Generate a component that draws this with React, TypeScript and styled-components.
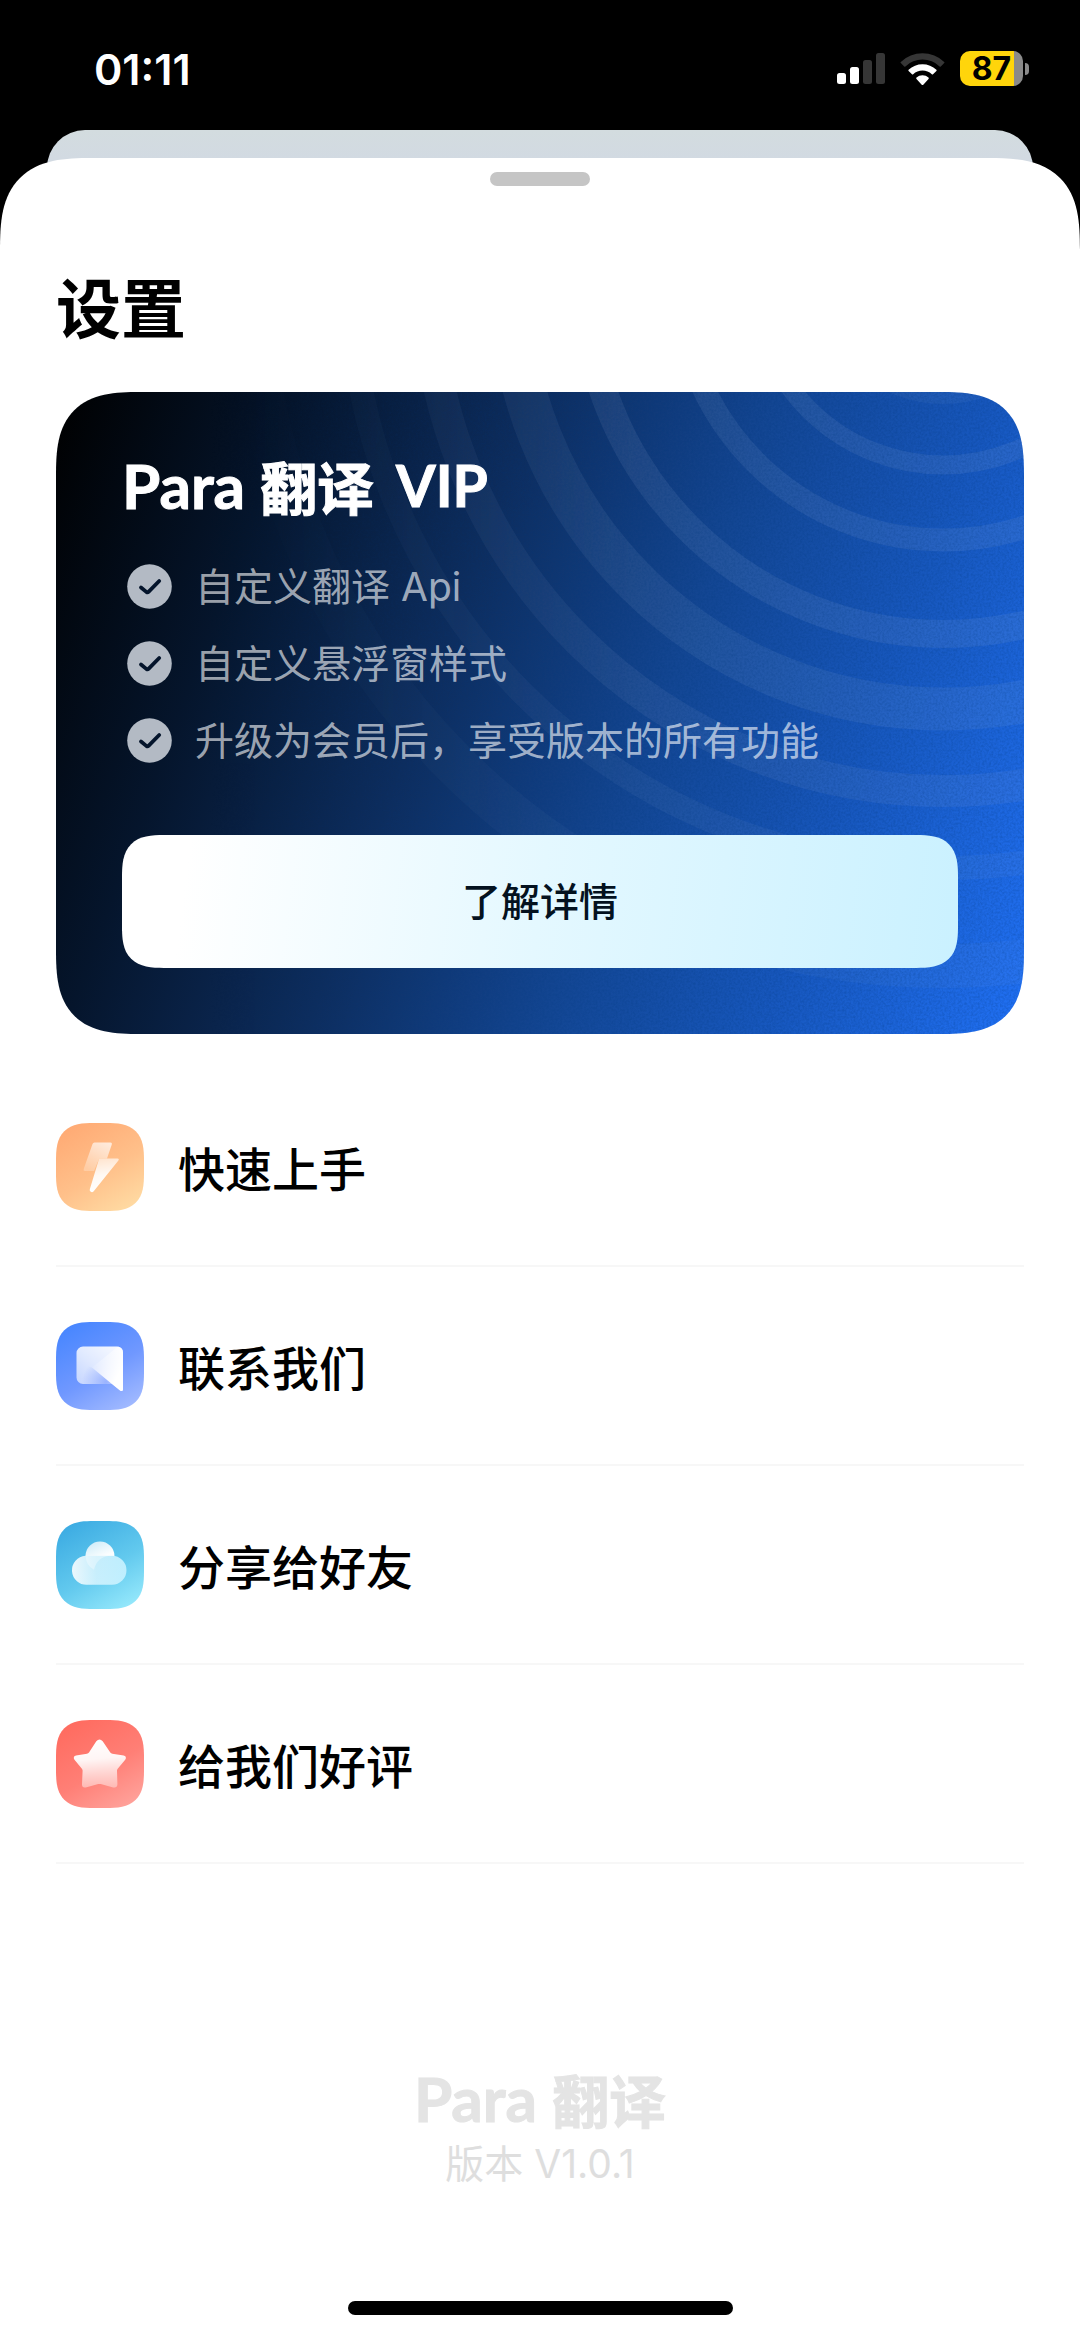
import React from "react";
import styled, { createGlobalStyle, css } from "styled-components";

const latin = `Inter, "Noto Sans CJK SC", sans-serif`;
const han = `"Noto Sans CJK SC", sans-serif`;

const GlobalStyle = createGlobalStyle`
  *, *::before, *::after { box-sizing: border-box; }
  html, body { margin: 0; padding: 0; background: #000; }
  body { font-family: ${latin}; color: #000; }
  h1, h2, p, ul { margin: 0; padding: 0; }
  ul { list-style: none; }
  button { font-family: inherit; border: 0; padding: 0; cursor: pointer; }
`;

/* Continuous corners where the browser knows them, plain round ones elsewhere. */
const smooth = (plain: number, extended: number, topOnly = false) => {
  const radius = (r: number) => (topOnly ? `${r}px ${r}px 0 0` : `${r}px`);
  return css`
    border-radius: ${radius(plain)};
    @supports (corner-shape: superellipse(1.5)) {
      border-radius: ${radius(extended)};
      corner-shape: superellipse(1.5);
    }
  `;
};

const Screen = styled.div`
  display: flex;
  flex-direction: column;
  min-height: 100vh;
  background: #000;
`;

const StatusBar = styled.header`
  display: flex;
  align-items: center;
  justify-content: space-between;
  height: 130px;
  padding: 7px 51px 0 94px;
  color: #fff;
`;

const Clock = styled.time`
  font-size: 43px;
  line-height: 52px;
  font-weight: 600;
`;

const StatusIcons = styled.div`
  display: flex;
  align-items: center;
  gap: 15px;
`;

const Battery = styled.div`
  display: flex;
  align-items: center;
  gap: 2px;
`;

const BatteryBody = styled.div`
  display: flex;
  align-items: center;
  justify-content: center;
  width: 63px;
  height: 35px;
  border-radius: 10px;
  background: linear-gradient(90deg, #ffd50b 86%, #8a8a8a 86%);
  color: #000;
  font-size: 32px;
  line-height: 35px;
  font-weight: 700;
`;

const BatteryTip = styled.div`
  width: 4px;
  height: 12px;
  border-radius: 0 4px 4px 0;
  background: #8a8a8a;
`;

const PageBehind = styled.div`
  height: 80px;
  margin: 0 47px;
  border-radius: 38px 38px 0 0;
  background: linear-gradient(#d3dcdf, #d2dae2 28px);
`;

const Sheet = styled.main`
  display: flex;
  flex: 1;
  flex-direction: column;
  margin-top: -52px;
  padding: 14px 56px 22px;
  background: #fff;
  ${smooth(66, 92, true)}
`;

const Grabber = styled.div`
  align-self: center;
  width: 100px;
  height: 14px;
  border-radius: 7px;
  background: #c5c5c5;
`;

const Title = styled.h1`
  margin-top: 84px;
  font-size: 65px;
  line-height: 80px;
  font-weight: 700;
`;

const Card = styled.section`
  position: relative;
  display: flex;
  flex-direction: column;
  margin-top: 42px;
  padding: 61px 66px 66px;
  overflow: hidden;
  background: linear-gradient(110deg, #000 0%, #05152c 20%, #0d2d5e 40%, #134693 60%, #1757bd 78%, #2171f5 100%);
  ${smooth(61, 84)}
`;

const CardArt = styled.svg`
  position: absolute;
  inset: 0;
  width: 100%;
  height: 100%;
`;

const BrandLine = styled.div<{ $tone: string }>`
  position: relative;
  display: flex;
  align-items: center;
  height: 64px;
  color: ${(p) => p.$tone};
  font-family: Lato, ${han};
  font-size: 62px;
  line-height: 64px;
  font-weight: 700;
  -webkit-text-stroke: 1px ${(p) => p.$tone};
`;

const BrandHan = styled.span`
  margin-left: 15px;
  font-family: ${han};
  font-size: 57px;
`;

const BrandTier = styled.span`
  margin-left: 22px;
  font-size: 57px;
`;

const Features = styled.ul`
  position: relative;
  display: flex;
  flex-direction: column;
  gap: 32px;
  margin: 47px 0 0 5px;
`;

const Feature = styled.li`
  display: flex;
  align-items: center;
  gap: 23px;
  height: 45px;
  color: rgba(255, 255, 255, 0.62);
  font-size: 39px;
  line-height: 45px;
`;

const DetailsButton = styled.button`
  position: relative;
  height: 133px;
  margin-top: 72px;
  background: linear-gradient(97deg, #fff 8%, #e4f8ff 50%, #caf1ff 100%);
  color: #04121f;
  font-size: 39px;
  line-height: 48px;
  font-weight: 500;
  ${smooth(31, 42)}
`;

const Menu = styled.ul`
  margin-top: 34px;
`;

const MenuItem = styled.li`
  border-bottom: 2px solid #f7f7f7;
`;

const MenuButton = styled.button`
  display: flex;
  align-items: center;
  gap: 34px;
  width: 100%;
  height: 197px;
  background: none;
  color: #000;
  font-family: ${han};
  font-size: 47px;
  line-height: 60px;
  font-weight: 500;
  text-align: left;
`;

const Tile = styled.span<{ $fill: string }>`
  display: block;
  width: 88px;
  height: 88px;
  background: ${(p) => p.$fill};
  ${smooth(29, 38)}
`;

const Footer = styled.footer`
  display: flex;
  flex-direction: column;
  align-items: center;
  gap: 10px;
  margin-top: auto;
  padding-top: 60px;
`;

const Version = styled.p`
  color: #dedede;
  font-size: 39px;
  line-height: 48px;
`;

const HomeIndicator = styled.div`
  align-self: center;
  width: 385px;
  height: 14px;
  margin-top: 113px;
  border-radius: 7px;
  background: #000;
`;

const SignalIcon = () => (
  <svg width="48" height="31" viewBox="0 0 48 31" aria-hidden="true">
    <rect x="0" y="20" width="9" height="11" rx="2.5" fill="#fff" />
    <rect x="13" y="14" width="9" height="17" rx="2.5" fill="#fff" />
    <rect x="26" y="7" width="9" height="24" rx="2.5" fill="#363636" />
    <rect x="39" y="0" width="9" height="31" rx="2.5" fill="#363636" />
  </svg>
);

const WifiIcon = () => (
  <svg width="45" height="34" viewBox="0 0 45 35" preserveAspectRatio="none" aria-hidden="true">
    <path d="M0.8 10.2a31 31 0 0 1 43.4 0q.6.6 0 1.2l-3.4 3.4q-.6.6-1.2 0a24.5 24.5 0 0 0-34.2 0q-.6.6-1.2 0L.8 11.4q-.6-.6 0-1.2z" fill="#363636" />
    <path d="M8.6 18.3a20 20 0 0 1 27.8 0q.6.6 0 1.2l-3.4 3.3q-.6.6-1.2 0a13.5 13.5 0 0 0-18.6 0q-.6.6-1.2 0l-3.4-3.3q-.6-.6 0-1.2z" fill="#fff" />
    <path d="M16.5 26.3a8.7 8.7 0 0 1 12 0q.7.7 0 1.4l-5.2 5.9q-.8.9-1.6 0l-5.2-5.9q-.7-.7 0-1.4z" fill="#fff" />
  </svg>
);

const rings = [
  { r: 119, w: 20, o: 0.07 },
  { r: 190, w: 19, o: 0.12 },
  { r: 265, w: 23, o: 0.12 },
  { r: 359, w: 28, o: 0.12 },
  { r: 434, w: 43, o: 0.11 },
  { r: 516, w: 32, o: 0.1 },
  { r: 593, w: 24, o: 0.08 },
  { r: 691, w: 44, o: 0.06 },
];

const CardBackdrop = () => (
  <CardArt viewBox="0 0 968 642" preserveAspectRatio="xMaxYMin slice" aria-hidden="true">
    <defs>
      <linearGradient id="fadeIn" x1="0" y1="0" x2="1" y2="0">
        <stop offset="0.15" stopColor="#fff" stopOpacity="0" />
        <stop offset="0.6" stopColor="#fff" stopOpacity="1" />
      </linearGradient>
      <linearGradient id="ringFade" x1="0" y1="0" x2="1" y2="0">
        <stop offset="0.2" stopColor="#fff" stopOpacity="0.1" />
        <stop offset="0.6" stopColor="#fff" stopOpacity="1" />
      </linearGradient>
      <mask id="grainMask">
        <rect width="968" height="642" fill="url(#fadeIn)" />
      </mask>
      <mask id="ringMask">
        <rect width="968" height="642" fill="url(#ringFade)" />
      </mask>
      <filter id="grain" x="0" y="0" width="1" height="1">
        <feTurbulence type="fractalNoise" baseFrequency="0.45" numOctaves="2" seed="4" />
        <feColorMatrix values="0 0 0 0 0  0 0 0 0 0.04  0 0 0 0 0.2  1.4 0 0 0 -0.5" />
      </filter>
    </defs>
    <g fill="none" stroke="#9ab4dc" mask="url(#ringMask)">
      {rings.map((ring) => (
        <circle key={ring.r} cx="887" cy="-117" r={ring.r} strokeWidth={ring.w} strokeOpacity={ring.o} />
      ))}
    </g>
    <g mask="url(#grainMask)" opacity="0.35">
      <rect width="968" height="642" filter="url(#grain)" />
    </g>
  </CardArt>
);

const CheckIcon = () => (
  <svg width="45" height="45" viewBox="0 0 45 45" aria-hidden="true">
    <circle cx="22.5" cy="22.5" r="22.3" fill="#b3bac4" />
    <path d="M14 23.5l5.6 4.6q1 .7 1.9-.2L32.2 17" fill="none" stroke="#04142b" strokeWidth="3.8" strokeLinecap="round" strokeLinejoin="round" />
  </svg>
);

const BoltIcon = () => (
  <svg width="88" height="88" viewBox="0 0 88 88" aria-hidden="true">
    <defs>
      <linearGradient id="boltBack" x1="0.7" y1="0" x2="0.3" y2="1">
        <stop offset="0" stopColor="#fff" stopOpacity="0.7" />
        <stop offset="1" stopColor="#fff" stopOpacity="0.25" />
      </linearGradient>
      <linearGradient id="boltFront" x1="0.3" y1="0" x2="0.4" y2="1">
        <stop offset="0" stopColor="#fff" stopOpacity="0.6" />
        <stop offset="0.5" stopColor="#fff" stopOpacity="0.9" />
        <stop offset="1" stopColor="#fff" />
      </linearGradient>
    </defs>
    <path d="M38.5 19.5h16q2 0 1.3 2L51 35.5 43 36l-5 12h-9q-2 0-1.3-2l8.800-25q.6-1.500 2-1.500z" fill="url(#boltBack)" />
    <path d="M43 36l8-.5h10.500q2 .2.9 1.900L37.700 68.200q-1.300 1.500-2.900.6-1.500-.9-1-2.500z" fill="url(#boltFront)" />
  </svg>
);

const ChatIcon = () => (
  <svg width="88" height="88" viewBox="0 0 88 88" aria-hidden="true">
    <defs>
      <linearGradient id="chatBody" x1="0.9" y1="0" x2="0.2" y2="1">
        <stop offset="0" stopColor="#fff" stopOpacity="0.95" />
        <stop offset="0.5" stopColor="#fff" stopOpacity="0.8" />
        <stop offset="1" stopColor="#fff" stopOpacity="0.6" />
      </linearGradient>
      <radialGradient id="chatShade" gradientUnits="userSpaceOnUse" cx="50" cy="60" r="24">
        <stop offset="0" stopColor="#7d9dff" stopOpacity="0.7" />
        <stop offset="1" stopColor="#7d9dff" stopOpacity="0" />
      </radialGradient>
      <linearGradient id="chatTail" x1="0.1" y1="0.2" x2="0.8" y2="0.7">
        <stop offset="0" stopColor="#fff" stopOpacity="0" />
        <stop offset="1" stopColor="#fff" />
      </linearGradient>
    </defs>
    <path d="M27 24.5h34a6 6 0 0 1 6 6V67.5q-.4 2.2-2.6 1.2L56 62H27a6.500 6.500 0 0 1-6.500-6.500V31a6.500 6.500 0 0 1 6.500-6.500z" fill="url(#chatBody)" />
    <path d="M36 45.500L56 62H27a6.500 6.500 0 0 1-6.500-6.500V40z" fill="url(#chatShade)" />
    <path d="M36 45.500L62 24.500a6 6 0 0 1 5 6V67.500q-.4 2.200-2.600 1.200z" fill="url(#chatTail)" />
  </svg>
);

const CloudIcon = () => (
  <svg width="88" height="88" viewBox="0 0 88 88" aria-hidden="true">
    <defs>
      <linearGradient id="cloudTop" x1="0.2" y1="0" x2="0.9" y2="0.8">
        <stop offset="0" stopColor="#fff" stopOpacity="0.72" />
        <stop offset="1" stopColor="#fff" stopOpacity="0.98" />
      </linearGradient>
      <linearGradient id="cloudBase" x1="0" y1="0.5" x2="1" y2="0.5">
        <stop offset="0" stopColor="#fff" stopOpacity="0.88" />
        <stop offset="0.45" stopColor="#d9f5ff" stopOpacity="0.85" />
        <stop offset="1" stopColor="#c5f1ff" stopOpacity="0.92" />
      </linearGradient>
    </defs>
    <path d="M29.500 35a14.500 14.500 0 0 1 29 0z" fill="url(#cloudTop)" />
    <path d="M29.500 34.800H56a14.500 14.500 0 0 1 0 29H31.500a14.500 14.500 0 0 1-2-29z" fill="url(#cloudBase)" />
    <path d="M29.500 34.800H54q-13 1-16 14-8-4-8.500-14z" fill="#fff" fillOpacity="0.350" />
  </svg>
);

const StarIcon = () => (
  <svg width="88" height="88" viewBox="0 0 88 88" aria-hidden="true">
    <defs>
      <linearGradient id="starFill" x1="0.45" y1="0" x2="0.55" y2="1">
        <stop offset="0" stopColor="#fff" />
        <stop offset="0.4" stopColor="#fff" stopOpacity="0.93" />
        <stop offset="1" stopColor="#fff" stopOpacity="0.4" />
      </linearGradient>
    </defs>
    <path
      d="M40.300 21.300q3.200-3.800 6.400 0l7.600 11.200q.8 1 2 1.200l11.400 1.900q3.500 1 1.500 4.200l-7.500 8.900q-.8 1-.7 2.300l.4 13.200q-.2 4-4.200 3.200l-12.500-3.300q-1.200-.3-2.400 0l-12.500 3.300q-4 .8-3.800-3.200l.6-13.200q.1-1.300-.7-2.300L18.500 39.800q-2-3.200 1.500-4.200l11-1.900q1.200-.2 2-1.200z"
      fill="url(#starFill)"
    />
  </svg>
);

const features = ["自定义翻译 Api", "自定义悬浮窗样式", "升级为会员后，享受版本的所有功能"];

const menu = [
  { label: "快速上手", icon: <BoltIcon />, fill: "linear-gradient(150deg, #ffa973 5%, #ffc08a 55%, #ffdca4 95%)" },
  { label: "联系我们", icon: <ChatIcon />, fill: "linear-gradient(150deg, #4585ff 5%, #7098ff 55%, #a5bcff 95%)" },
  { label: "分享给好友", icon: <CloudIcon />, fill: "linear-gradient(150deg, #3aaae2 5%, #62c9ee 55%, #98eafc 95%)" },
  { label: "给我们好评", icon: <StarIcon />, fill: "linear-gradient(150deg, #ff6a5e 5%, #ff7f76 55%, #ffa49d 95%)" },
];

const Brand = ({ tone, tier }: { tone: string; tier?: string }) => (
  <BrandLine $tone={tone}>
    Para<BrandHan>翻译</BrandHan>
    {tier && <BrandTier>{tier}</BrandTier>}
  </BrandLine>
);

export default function App() {
  return (
    <>
      <GlobalStyle />
      <Screen>
        <StatusBar>
          <Clock>01:11</Clock>
          <StatusIcons>
            <SignalIcon />
            <WifiIcon />
            <Battery>
              <BatteryBody>87</BatteryBody>
              <BatteryTip />
            </Battery>
          </StatusIcons>
        </StatusBar>
        <PageBehind />
        <Sheet>
          <Grabber />
          <Title>设置</Title>
          <Card>
            <CardBackdrop />
            <Brand tone="#fff" tier="VIP" />
            <Features>
              {features.map((text) => (
                <Feature key={text}>
                  <CheckIcon />
                  {text}
                </Feature>
              ))}
            </Features>
            <DetailsButton type="button">了解详情</DetailsButton>
          </Card>
          <Menu>
            {menu.map((item) => (
              <MenuItem key={item.label}>
                <MenuButton type="button">
                  <Tile $fill={item.fill}>{item.icon}</Tile>
                  {item.label}
                </MenuButton>
              </MenuItem>
            ))}
          </Menu>
          <Footer>
            <Brand tone="#e4e4e4" />
            <Version>版本 V1.0.1</Version>
          </Footer>
          <HomeIndicator />
        </Sheet>
      </Screen>
    </>
  );
}
